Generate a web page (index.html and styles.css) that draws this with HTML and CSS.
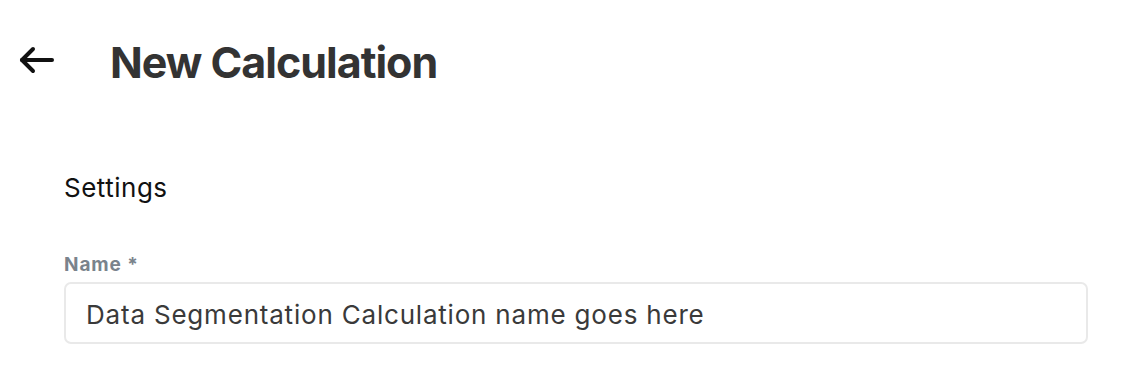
FILE: index.html
```html
<!DOCTYPE html>
<html>
<head>
<meta charset="utf-8">
<link rel="stylesheet" href="styles.css">
</head>
<body>
<header class="page-header">
  <button class="back-btn" aria-label="Back">
    <svg width="36" height="28" viewBox="0 0 36 28" fill="none" stroke="#111" stroke-width="4" stroke-linecap="round" stroke-linejoin="round">
      <path d="M33 14H3"/>
      <path d="M14 3L3 14l11 11"/>
    </svg>
  </button>
  <h1 class="title">New Calculation</h1>
</header>
<main class="content">
  <h2 class="section-title">Settings</h2>
  <div class="field">
    <label class="field-label" for="name">Name *</label>
    <input class="field-input" id="name" type="text" value="Data Segmentation Calculation name goes here">
  </div>
</main>
</body>
</html>
```
FILE: styles.css
```css
* { box-sizing: border-box; }
body {
  margin: 0;
  background: #fff;
  font-family: "Inter", "Lato", sans-serif;
  font-variant-ligatures: none;
}
.page-header {
  display: flex;
  align-items: center;
  height: 120px;
  padding: 4px 0 0 19px;
}
.back-btn {
  border: 0;
  background: none;
  padding: 0;
  margin: -4px 0 0;
  width: 36px;
  height: 28px;
  display: flex;
  cursor: pointer;
}
.title {
  margin: 0 0 0 55px;
  font-size: 43px;
  font-weight: 700;
  color: #333;
  line-height: normal;
  letter-spacing: -1px;
}
.content {
  padding-left: 64px;
  width: 1088px;
}
.section-title {
  margin: 52px 0 0;
  font-size: 26px;
  font-weight: 400;
  color: #111;
  line-height: 32px;
  letter-spacing: 0.5px;
}
.field {
  margin-top: 49px;
  display: flex;
  flex-direction: column;
}
.field-label {
  font-size: 19px;
  font-weight: 700;
  color: #7a838c;
  line-height: 24px;
  margin-bottom: 5px;
  letter-spacing: 0.9px;
}
.field-input {
  height: 62px;
  border: 2px solid #e9e9e9;
  border-radius: 7px;
  padding: 3px 20px 0;
  font-family: inherit;
  font-size: 26px;
  color: #3a3a3a;
  outline: none;
  letter-spacing: 0.8px;
}
```
